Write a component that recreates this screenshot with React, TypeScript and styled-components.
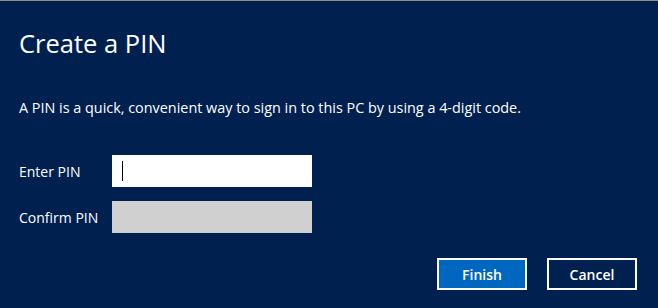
import React from 'react';
import styled, { createGlobalStyle } from 'styled-components';

const GlobalStyle = createGlobalStyle`
  html, body {
    margin: 0;
    padding: 0;
    background: #002050;
  }
`;

const Dialog = styled.div`
  width: 658px;
  height: 308px;
  box-sizing: border-box;
  background: #002050;
  border-top: 1px solid #8c8c8c;
  padding: 0 21px 0 19px;
  display: flex;
  flex-direction: column;
  font-family: 'Open Sans', 'Noto Sans', sans-serif;
  color: #ffffff;
`;

const Title = styled.h1`
  margin: 26px 0 0;
  font-size: 25.5px;
  font-weight: 400;
  line-height: 32px;
`;

const Description = styled.p`
  margin: 39px 0 0;
  font-size: 14.4px;
  line-height: 20px;
`;

const Form = styled.div`
  margin-top: 37px;
  display: grid;
  grid-template-columns: 93px 200px;
  row-gap: 14px;
  align-items: center;
`;

const Label = styled.label`
  font-size: 14px;
`;

const PinBox = styled.div<{ $disabled?: boolean }>`
  position: relative;
  height: 32px;
  background: ${({ $disabled }) => ($disabled ? '#d0d0d0' : '#ffffff')};
`;

const Caret = styled.span`
  position: absolute;
  left: 10px;
  top: 6px;
  width: 1px;
  height: 20px;
  background: #000000;
`;

const ButtonRow = styled.div`
  margin-top: 25px;
  display: flex;
  justify-content: flex-end;
  gap: 20px;
`;

const Button = styled.button<{ $primary?: boolean }>`
  width: 90px;
  height: 32px;
  box-sizing: border-box;
  border: 2px solid #ffffff;
  background: ${({ $primary }) => ($primary ? '#0067c0' : 'transparent')};
  color: #ffffff;
  font-family: 'Open Sans', 'Noto Sans', sans-serif;
  font-size: 14px;
  font-weight: 600;
  padding: 0;
`;

export default function App() {
  return (
    <>
      <GlobalStyle />
      <Dialog>
        <Title>Create a PIN</Title>
        <Description>
          A PIN is a quick, convenient way to sign in to this PC by using a 4-digit code.
        </Description>
        <Form>
          <Label>Enter PIN</Label>
          <PinBox>
            <Caret />
          </PinBox>
          <Label>Confirm PIN</Label>
          <PinBox $disabled />
        </Form>
        <ButtonRow>
          <Button $primary>Finish</Button>
          <Button>Cancel</Button>
        </ButtonRow>
      </Dialog>
    </>
  );
}
